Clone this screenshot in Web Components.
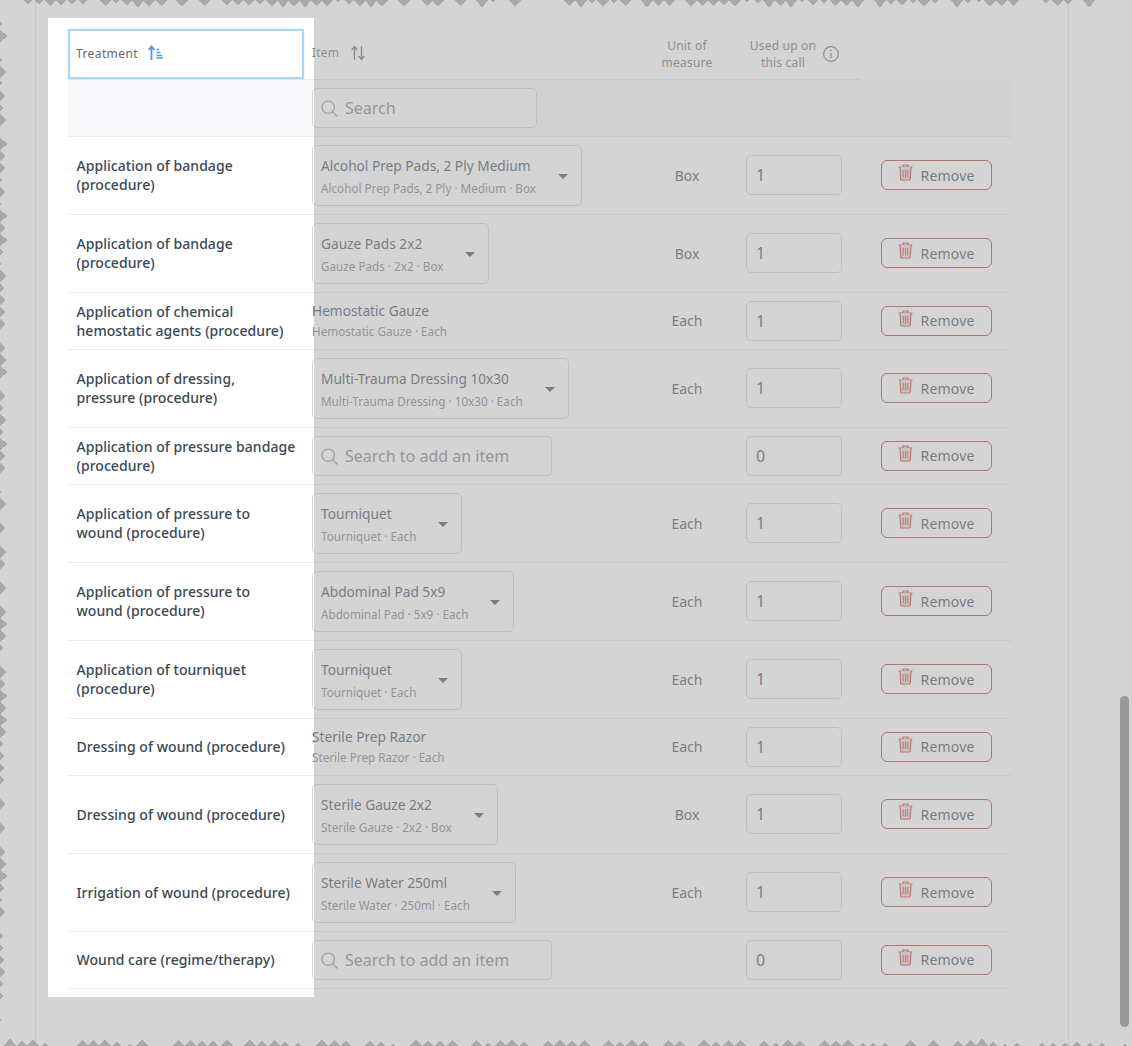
<!DOCTYPE html>
<html lang="en"><head><meta charset="utf-8"><title>Treatment items</title>
<style>
html,body{margin:0;padding:0;background:#fff;overflow:hidden}
body{font-family:"Noto Sans","Liberation Sans",sans-serif;color:#2c3a47}
</style></head><body>
<care-page>
  <care-table>
    <care-header></care-header>
    <care-filter></care-filter>
    <care-row unit="Box" qty="1"><span>Application of bandage (procedure)</span><item-select slot="item" title-text="Alcohol Prep Pads, 2 Ply Medium" sub="Alcohol Prep Pads, 2 Ply · Medium · Box"></item-select></care-row>
    <care-row unit="Box" qty="1"><span>Application of bandage (procedure)</span><item-select slot="item" title-text="Gauze Pads 2x2" sub="Gauze Pads · 2x2 · Box"></item-select></care-row>
    <care-row unit="Each" qty="1"><span>Application of chemical hemostatic agents (procedure)</span><item-plain slot="item" title-text="Hemostatic Gauze" sub="Hemostatic Gauze · Each"></item-plain></care-row>
    <care-row unit="Each" qty="1"><span>Application of dressing, pressure (procedure)</span><item-select slot="item" title-text="Multi-Trauma Dressing 10x30" sub="Multi-Trauma Dressing · 10x30 · Each"></item-select></care-row>
    <care-row unit="" qty="0"><span>Application of pressure bandage (procedure)</span><search-box slot="item" width="240" placeholder="Search to add an item"></search-box></care-row>
    <care-row unit="Each" qty="1"><span>Application of pressure to wound (procedure)</span><item-select slot="item" title-text="Tourniquet" sub="Tourniquet · Each"></item-select></care-row>
    <care-row unit="Each" qty="1"><span>Application of pressure to wound (procedure)</span><item-select slot="item" title-text="Abdominal Pad 5x9" sub="Abdominal Pad · 5x9 · Each"></item-select></care-row>
    <care-row unit="Each" qty="1"><span>Application of tourniquet (procedure)</span><item-select slot="item" title-text="Tourniquet" sub="Tourniquet · Each"></item-select></care-row>
    <care-row unit="Each" qty="1"><span>Dressing of wound (procedure)</span><item-plain slot="item" title-text="Sterile Prep Razor" sub="Sterile Prep Razor · Each"></item-plain></care-row>
    <care-row unit="Box" qty="1"><span>Dressing of wound (procedure)</span><item-select slot="item" title-text="Sterile Gauze 2x2" sub="Sterile Gauze · 2x2 · Box"></item-select></care-row>
    <care-row unit="Each" qty="1"><span>Irrigation of wound (procedure)</span><item-select slot="item" title-text="Sterile Water 250ml" sub="Sterile Water · 250ml · Each"></item-select></care-row>
    <care-row unit="" qty="0"><span>Wound care (regime/therapy)</span><search-box slot="item" width="240" placeholder="Search to add an item"></search-box></care-row>
  </care-table>
</care-page>
<script>
const SEARCH_ICON=`<svg width="17" height="17" viewBox="0 0 17 17" fill="none" stroke="#8a8a8a" stroke-width="1.2" stroke-linecap="round"><circle cx="7.2" cy="7.2" r="6.2"/><path d="M11.8 11.8 16 16"/></svg>`;
function def(name,html,init){
  customElements.define(name,class extends HTMLElement{
    connectedCallback(){
      if(this.shadowRoot)return;
      const a=n=>this.getAttribute(n)||'';
      this.attachShadow({mode:'open'}).innerHTML=html(a);
      if(init)init(this.shadowRoot,this);
    }
  });
}
const COLS='display:grid;grid-template-columns:236px 335px 96px 125px 152px;';

/* torn edge of the capture: teeth as [centre, depth] */
const TOP=[[28,3],[39,3],[50,5],[61,4],[72,3],[83,3],[105,5],[116,2],[127,4],[138,7],[149,6],[161,5],[182,6],[204,5],[227,4],[238,4],[249,4],[260,3],[272,6],[283,7],[294,6],[305,7],[316,5],[327,6],[338,1],[349,3],[360,6],[371,7],[382,6],[404,6],[427,5],[438,6],[460,5],[482,7],[493,1],[515,6],[569,5],[581,7],[592,2],[603,6],[614,2],[625,5],[647,7],[658,5],[669,5],[691,6],[702,5],[713,5],[724,4],[735,6],[747,1],[758,2],[769,7],[780,5],[791,7],[802,1],[813,4],[824,2],[835,5],[846,5],[858,7],[880,7],[891,3],[902,4],[913,2],[924,6],[935,2],[957,7],[968,2],[979,1],[990,6],[1001,5],[1013,5],[1046,2],[1057,5],[1068,3],[1089,7]];
const LEFT=[[24,2],[36,8],[60,2],[72,6],[83,2],[96,5],[108,3],[120,7],[144,8],[156,5],[168,5],[180,2],[192,5],[204,1],[216,8],[228,5],[240,8],[252,3],[264,1],[276,6],[288,4],[300,5],[312,5],[324,5],[348,5],[360,6],[372,8],[396,5],[408,3],[420,6],[432,3],[444,8],[456,5],[468,5],[492,1],[504,7],[528,5],[552,6],[564,5],[588,6],[612,6],[624,8],[636,6],[648,3],[672,7],[684,5],[696,8],[708,6],[720,8],[732,6],[744,3],[756,4],[768,4],[780,4],[804,5],[828,5],[852,5],[864,7],[876,8],[888,4],[900,2],[912,5],[936,3],[948,3],[960,4],[972,5],[984,3],[996,3],[1020,1]];
const BOTTOM=[[10,8],[22,5],[33,7],[45,3],[82,6],[93,6],[105,7],[117,4],[130,2],[142,7],[178,6],[190,6],[202,5],[213,5],[227,7],[250,7],[262,5],[274,6],[285,4],[298,3],[322,7],[334,6],[346,5],[370,5],[381,4],[393,2],[416,7],[428,5],[440,5],[452,6],[476,6],[488,3],[500,6],[512,7],[524,4],[548,5],[560,7],[572,5],[584,6],[608,6],[620,4],[632,7],[644,5],[668,6],[680,5],[704,7],[716,4],[728,6],[740,6],[764,5],[776,3],[788,7],[800,5],[824,6],[836,5],[848,7],[863,3],[873,3],[885,3],[910,6],[933,6],[958,5],[970,6],[982,8],[993,4],[1005,2],[1017,3],[1042,3],[1053,3],[1065,3],[1077,4],[1090,3],[1102,3],[1125,2]];
function teeth(){
  const hw=d=>Math.min(6,d+1);
  let p='';
  for(const [x,d0] of TOP){const d=d0+1;p+=`M${x-hw(d)} 0L${x} ${d}L${x+hw(d)} 0Z`;}
  for(const [y,d] of LEFT) p+=`M0 ${y-hw(d)}L${d} ${y}L0 ${y+hw(d)}Z`;
  for(const [x,d] of BOTTOM) p+=`M${x-hw(d)} 1046L${x} ${1046-d}L${x+hw(d)} 1046Z`;
  return p;
}

def('care-page',()=>`<style>
:host{display:block;position:relative;width:1132px;height:1046px;overflow:hidden;background:#fff}
.frame{box-sizing:border-box;margin-left:35px;width:1034px;height:1046px;border:solid #e1e1e1;border-width:0 1px;padding:29px 0 0 32px}
.edge{position:absolute;inset:0;width:1132px;height:1046px}
.thumb{position:absolute;left:1120px;top:696px;width:9px;height:331px;border-radius:5px;background:#858585}
.spot{position:absolute;left:48px;top:18px;width:266px;height:979px;box-shadow:0 0 0 1400px rgba(173,173,173,.52)}
</style>
<svg class="edge" viewBox="0 0 1132 1046"><path d="${teeth()}" fill="#a6a6a6" shape-rendering="crispEdges"/></svg>
<div class="frame"><slot></slot></div>
<div class="thumb"></div>
<div class="spot"></div>`);

def('care-table',()=>`<style>:host{display:block;width:944px;position:relative}</style><slot></slot>`);

def('care-header',()=>`<style>
:host{display:block}
.r{${COLS}height:51px;font-size:12px;line-height:17px;color:#6d6d6d;letter-spacing:.2px}
.c{display:flex;align-items:center;box-sizing:border-box;border-bottom:1px solid #e8e8e8}
.t{box-sizing:border-box;width:236px;height:50px;border:2px solid #a9d5f6;box-shadow:0 0 1px #a9d5f6;padding:0 0 2px 6px;gap:9px;color:#666;letter-spacing:.4px}
.tw{border-bottom:1px solid #e8e8e8;align-items:flex-start}
.i{padding:0 0 3px 8px;gap:12px}
.u{justify-content:center;text-align:center;padding-bottom:1px}
.v{padding-left:11px;gap:3px}
.v span{display:block;width:74px;text-align:center}
.x{border-bottom:none}
svg{display:block;flex:none}
</style>
<div class="r">
<div class="c tw"><div class="c t"><span>Treatment</span>
<svg width="17" height="16" viewBox="0 0 17 16" fill="none" stroke="#4f96dc"><path d="M4.5 15V2M1.5 5 4.5 1.5 7.5 5" stroke-width="1.8"/><path d="M9.5 4.5h2.5M9.5 7.5h4M9.5 10.5h5.5M9.5 13h6.5" stroke-width="1.3"/></svg></div></div>
<div class="c i"><span>Item</span>
<svg width="14" height="16" viewBox="0 0 14 16" fill="none" stroke="#666" stroke-width="1.3"><path d="M3.5 15V2M.7 5 3.5 1.5 6.3 5M10.5 1v13M7.7 11l2.8 3.5 2.8-3.5"/></svg></div>
<div class="c u"><span>Unit of<br>measure</span></div>
<div class="c v"><span>Used up on this call</span>
<svg width="16" height="16" viewBox="0 0 16 16" fill="none" stroke="#666"><circle cx="8" cy="8" r="7.4" stroke-width="1.1"/><path d="M8 7v5" stroke-width="1.2"/><circle cx="8" cy="4.6" r=".8" fill="#666" stroke="none"/></svg></div>
<div class="c x"></div>
</div>`);

def('care-filter',()=>`<style>
:host{display:block;background:#f8f8fa;border-bottom:1px solid #ececec;box-sizing:border-box;height:57px;padding:8px 0 0 244px}
</style><search-box width="225" placeholder="Search"></search-box>`);

def('care-row',a=>`<style>
:host{display:block}
.r{${COLS}align-items:center;border-bottom:1px solid #ececec;font-size:14px;line-height:19px}
.t{padding:0 8px .5px 8.5px;color:#3a4853;font-weight:500;letter-spacing:.05px}
.i{padding:8px 0 8px 8px;display:flex;align-items:center}
.u{text-align:center;color:#3e4c56;padding-bottom:.5px}
.q{padding:0 0 0 11px;display:flex}
:host([tall]) .q{padding-bottom:.5px}
.x{display:flex;justify-content:center;padding-bottom:.5px}
</style>
<div class="r">
<div class="t"><slot></slot></div>
<div class="i"><slot name="item"></slot></div>
<div class="u">${a('unit')}</div>
<div class="q"><qty-box value="${a('qty')}"></qty-box></div>
<div class="x"><remove-button></remove-button></div>
</div>`,(root,el)=>{if(el.querySelector('item-select'))el.setAttribute('tall','')});

def('item-select',a=>`<style>
:host{display:inline-flex;align-items:center;gap:22px;box-sizing:border-box;height:61px;padding:0 13px 0 8px;border:1px solid #d4d4d4;border-radius:5px;background:#fff}
.w{padding-top:1px}
.t{font-size:13.7px;line-height:19px;color:#3a4852;margin-bottom:4px;white-space:nowrap}
.s{font-size:11.7px;line-height:18px;color:#75787b;white-space:nowrap}
i{display:block;width:0;height:0;border:5px solid transparent;border-top:5.5px solid #3e4a54;border-bottom:0;margin-top:2px}
</style><div class="w"><div class="t">${a('title-text')}</div><div class="s">${a('sub')}</div></div><i></i>`);

def('item-plain',a=>`<style>
:host{display:block;box-sizing:border-box;height:40px}
.t{font-size:13.7px;line-height:19px;color:#3a4852;margin-bottom:1.5px;white-space:nowrap}
.s{font-size:11.7px;line-height:19px;color:#75787b;white-space:nowrap}
</style><div class="t">${a('title-text')}</div><div class="s">${a('sub')}</div>`);

def('search-box',a=>`<style>
:host{display:flex;align-items:center;gap:7px;box-sizing:border-box;width:${a('width')}px;height:40px;padding:0 8px 0 8px;border:1px solid #d4d4d4;border-radius:5px;background:#fff;font-size:16px;color:#7c7c7c}
svg{display:block;flex:none}
</style>${SEARCH_ICON}<span>${a('placeholder')}</span>`);

def('qty-box',a=>`<style>
:host{display:flex;align-items:center;box-sizing:border-box;width:96px;height:40px;padding-left:9px;border:1px solid #d4d4d4;border-radius:5px;background:#fff;font-size:16px;color:#4a4a4a}
</style>${a('value')}`);

def('remove-button',()=>`<style>
:host{display:flex;align-items:center;box-sizing:border-box;width:111px;height:30px;padding-left:16px;gap:8px;border:1px solid #ab3a36;border-radius:6px;background:#fff;font-size:14px;color:#37474f;letter-spacing:.2px}
svg{display:block;flex:none;margin-top:-5px}
</style><svg width="15" height="17" viewBox="0 0 15 17" fill="none" stroke="#c2423a"><path d="M.5 3h14M5 3V1h5v2" stroke-width="1.2"/><path d="M2 3l.7 12a1 1 0 0 0 1 1h7.6a1 1 0 0 0 1-1L13 3" stroke-width="1.2" fill="#f5d8d5"/><path d="M5.2 6v7.5M7.5 6v7.5M9.8 6v7.5" stroke-width="1"/></svg><span>Remove</span>`);
</script>
</body></html>
